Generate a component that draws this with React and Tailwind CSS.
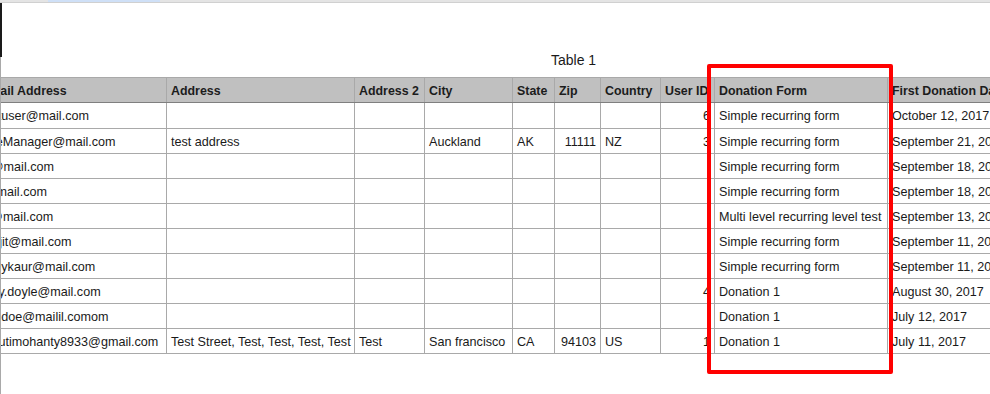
import React from "react";

const cols = [
  { key: "email", label: "Email Address" },
  { key: "addr", label: "Address" },
  { key: "addr2", label: "Address 2" },
  { key: "city", label: "City" },
  { key: "state", label: "State" },
  { key: "zip", label: "Zip", right: true },
  { key: "country", label: "Country" },
  { key: "uid", label: "User ID", right: true },
  { key: "form", label: "Donation Form" },
  { key: "date", label: "First Donation Date" },
];

const rows = [
  { email: "testuser@mail.com", uid: "6", form: "Simple recurring form", date: "October 12, 2017" },
  { email: "SiteManager@mail.com", addr: "test address", city: "Auckland", state: "AK", zip: "11111", country: "NZ", uid: "3", form: "Simple recurring form", date: "September 21, 2017" },
  { email: "jo@mail.com", form: "Simple recurring form", date: "September 18, 2017" },
  { email: "i@mail.com", form: "Simple recurring form", date: "September 18, 2017" },
  { email: "sj@mail.com", form: "Multi level recurring level test", date: "September 13, 2017" },
  { email: "harjit@mail.com", form: "Simple recurring form", date: "September 11, 2017" },
  { email: "sonykaur@mail.com", form: "Simple recurring form", date: "September 11, 2017" },
  { email: "tony.doyle@mail.com", uid: "4", form: "Donation 1", date: "August 30, 2017" },
  { email: "sandoe@mailil.comom", form: "Donation 1", date: "July 12, 2017" },
  { email: "shrutimohanty8933@gmail.com", addr: "Test Street, Test, Test, Test, Test", addr2: "Test", city: "San francisco", state: "CA", zip: "94103", country: "US", uid: "1", form: "Donation 1", date: "July 11, 2017" },
];

const gridCols =
  "grid grid-cols-[190px_188px_70px_88px_42px_46px_60px_54px_173px_240px]";

function Cell({ children, right, header }) {
  return (
    <div
      className={
        "flex items-center whitespace-nowrap overflow-hidden border-r border-[#a9a9a9] px-[4px] pt-[2px] " +
        (header ? "font-bold text-[12.4px] text-[#1c1c1c] " : "text-[12.6px] text-[#1a1a1a] ") +
        (right ? "justify-end" : "justify-start")
      }
    >
      {children}
    </div>
  );
}

export default function App() {
  return (
    <div className="relative w-[990px] h-[394px] overflow-hidden bg-white font-['Liberation_Sans',Arial,sans-serif]">
      {/* top strip */}
      <div className="flex h-[3px] bg-[#e4e4e4] border-b border-[#d0d0d0]">
        <div className="ml-[48px] w-[112px] bg-[#cfe0f7]" />
      </div>

      {/* sheet area */}
      <div className="h-[391px] border-l border-[#a9a9a9] overflow-hidden">
        <div className="flex h-[74px] items-end pl-[550px] pb-[8px]">
          <span className="text-[14px] leading-[17px] text-[#1a1a1a]">Table 1</span>
        </div>

        <div className="ml-[-24px] w-[1151px]">
          <div className={gridCols + " h-[26px] bg-[#c0c0c0] border-t border-b border-t-[#a9a9a9] border-b-[#7f7f7f]"}>
            {cols.map((c) => (
              <Cell key={c.key} header>
                {c.label}
              </Cell>
            ))}
          </div>
          {rows.map((r, i) => (
            <div
              key={i}
              className={gridCols + (i === 0 ? " h-[26px]" : " h-[25px]") + " border-b border-[#a9a9a9]"}
            >
              {cols.map((c) => (
                <Cell key={c.key} right={c.right}>
                  {r[c.key] || ""}
                </Cell>
              ))}
            </div>
          ))}
        </div>
      </div>

      {/* caret / selection edge */}
      <div className="absolute left-0 top-[3px] w-[2px] h-[54px] bg-[#1a1a1a]" />

      {/* red highlight box */}
      <div className="absolute left-[707px] top-[64px] w-[186px] h-[310px] border-4 border-[#ff0000] rounded-[2px]" />
    </div>
  );
}
